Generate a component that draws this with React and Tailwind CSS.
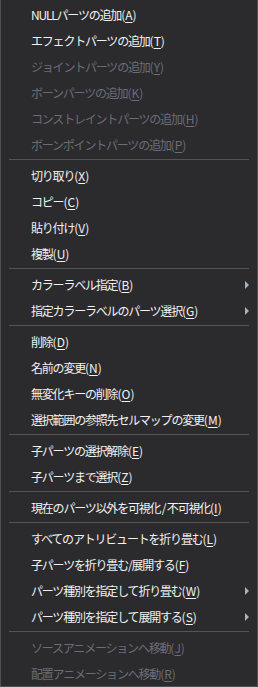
import React from "react";

const SEP = "sep";
const items = [
  { t: "NULLパーツの追加", k: "A" },
  { t: "エフェクトパーツの追加", k: "T" },
  { t: "ジョイントパーツの追加", k: "Y", d: true },
  { t: "ボーンパーツの追加", k: "K", d: true },
  { t: "コンストレイントパーツの追加", k: "H", d: true },
  { t: "ボーンポイントパーツの追加", k: "P", d: true },
  SEP,
  { t: "切り取り", k: "X" },
  { t: "コピー", k: "C" },
  { t: "貼り付け", k: "V" },
  { t: "複製", k: "U" },
  SEP,
  { t: "カラーラベル指定", k: "B", sub: true },
  { t: "指定カラーラベルのパーツ選択", k: "G", sub: true },
  SEP,
  { t: "削除", k: "D" },
  { t: "名前の変更", k: "N" },
  { t: "無変化キーの削除", k: "O" },
  { t: "選択範囲の参照先セルマップの変更", k: "M" },
  SEP,
  { t: "子パーツの選択解除", k: "E" },
  { t: "子パーツまで選択", k: "Z" },
  SEP,
  { t: "現在のパーツ以外を可視化 / 不可視化", k: "I" },
  SEP,
  { t: "すべてのアトリビュートを折り畳む", k: "L" },
  { t: "子パーツを折り畳む/展開する", k: "F" },
  { t: "パーツ種別を指定して折り畳む", k: "W", sub: true },
  { t: "パーツ種別を指定して展開する", k: "S", sub: true },
  SEP,
  { t: "ソースアニメーションへ移動", k: "J", d: true },
  { t: "配置アニメーションへ移動", k: "R", d: true },
];

export default function App() {
  return (
    <div
      className="box-border w-[258px] h-[687px] overflow-hidden bg-[#2b2b2e] border-l border-r border-b border-[#505052] pt-[2px] text-[12px] leading-none"
      style={{ fontFamily: '"Noto Sans CJK JP", "Noto Sans", sans-serif' }}
    >
      {items.map((it, i) =>
        it === SEP ? (
          <div key={i} className="h-[5px] pt-[1px] px-[8px]">
            <div className="h-px bg-[#545456]" />
          </div>
        ) : (
          <div
            key={i}
            className={`h-[26px] flex items-center pl-[30px] pr-[8px] ${it.d ? "text-[#6c6c76]" : "text-[#f2f2f2]"}`}
          >
            <span className="flex-1 whitespace-nowrap">
              <span className="tracking-[-1.2px]">{it.t}</span>
              <span className="tracking-[0px]">
                (<span className="underline underline-offset-[2px]">{it.k}</span>)
              </span>
            </span>
            {it.sub && (
              <svg width="4" height="8" viewBox="0 0 4 8" className="shrink-0">
                <path d="M0 0 L4 4 L0 8 Z" fill="#9fb4c6" />
              </svg>
            )}
          </div>
        )
      )}
    </div>
  );
}
